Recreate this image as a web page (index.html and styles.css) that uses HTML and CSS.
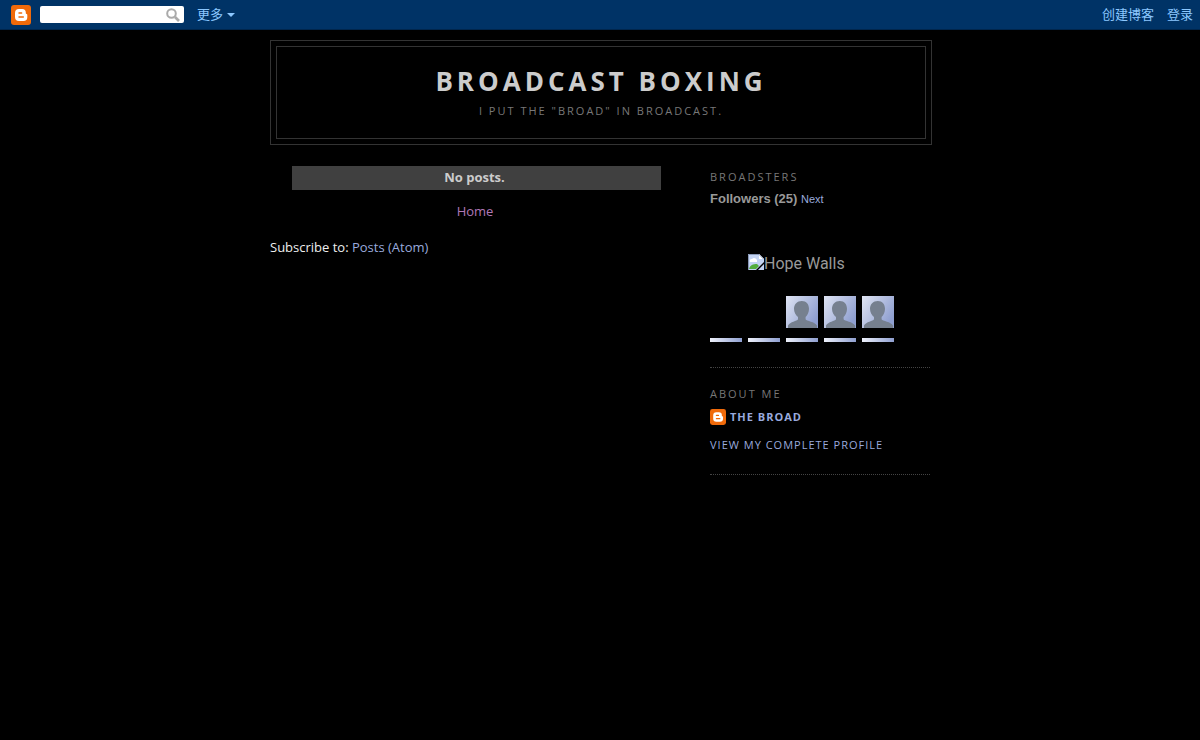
FILE: index.html
```html
<!DOCTYPE html>
<html lang="en">
<head>
    <meta charset="UTF-8">
    <meta name="viewport" content="width=device-width, initial-scale=1">
    <title>Broadcast Boxing</title>
    <link rel="stylesheet" href="styles.css">
</head>
<body>
<!-- shared drawings -->
<svg class="defs" width="0" height="0" aria-hidden="true">
    <defs>
        <linearGradient id="sky" x1="0" y1="0" x2="1" y2="0.6">
            <stop offset="0" stop-color="#e0e5f4"/>
            <stop offset="1" stop-color="#8f9fd0"/>
        </linearGradient>
        <symbol id="blogger" viewBox="0 0 20 20">
            <rect width="20" height="20" rx="3" fill="#f06a0a"/>
            <path fill="#fff" d="M8 4h3.200a3.600 3.600 0 0 1 3.600 3.600v.7c0 .5.3.8.8.8.4 0 .7.3.7.8v2.300a3.800 3.800 0 0 1-3.800 3.800H8a4 4 0 0 1-4-4V8a4 4 0 0 1 4-4z"/>
            <path stroke="#f06a0a" stroke-width="1.500" stroke-linecap="round" d="M8 8h2.600M8 12.100h4.300"/>
        </symbol>
        <symbol id="person" viewBox="0 0 32 32">
            <rect width="32" height="32" fill="url(#sky)"/>
            <path fill="#76808f" d="M15.800 5c4.600 0 7.200 3.200 7.200 7.800 0 3.600-1.500 6.600-3.400 8.200v2.300c.8 2 9.400 2.400 11.400 6.200V32H2v-2.500c2-3.800 9.200-4.200 10-6.200V21c-2.300-1.600-4-4.600-4-8.200C8 8.200 11.200 5 15.800 5z"/>
        </symbol>
    </defs>
</svg>

<div id="navbar">
    <a class="logo" href="#" aria-label="Blogger"><svg width="20" height="20"><use href="#blogger"/></svg></a>
    <form class="search">
        <input type="text" aria-label="Search">
        <button type="submit" aria-label="Search">
            <svg width="14" height="14" viewBox="0 0 14 14" fill="none" stroke="#aaa">
                <circle cx="5.500" cy="5.500" r="4.300" stroke-width="2"/>
                <path d="M9 9l4 4" stroke-width="2.600"/>
            </svg>
        </button>
    </form>
    <button type="button" class="more">更多<span class="arrow"></span></button>
    <div class="account">
        <a href="#">创建博客</a>
        <a href="#">登录</a>
    </div>
</div>

<div id="outer-wrapper">
    <div id="header-wrapper">
        <div id="header">
            <h1>Broadcast Boxing</h1>
            <p class="description">I put the "broad" in broadcast.</p>
        </div>
    </div>

    <div id="content-wrapper">
        <div id="main">
            <div class="status-msg">No posts.</div>
            <div id="blog-pager"><a href="#">Home</a></div>
            <div class="feed-links">Subscribe to: <a href="#">Posts (Atom)</a></div>
        </div>

        <div id="sidebar">
            <div class="widget">
                <h2>Broadsters</h2>
                <div class="followers-title"><b>Followers (25)</b> <a href="#">Next</a></div>
                <div class="followers">
                    <span></span>
                    <span class="broken">
                        <svg width="16" height="16" viewBox="0 0 16 16">
                            <path fill="#c3d3f3" d="M0 0h11l5 5v3L8 16H0z"/>
                            <path fill="#fff" d="M11 0v5h5z"/>
                            <path fill="#fff" d="M2 8a2 2 0 0 1 2-3 3 3 0 0 1 5 3z"/>
                            <path fill="#53ad3c" d="M1 15c1-4 4-5 8-5l2 2-3 3z"/>
                            <path fill="#c3d3f3" d="M16 10v6h-6z"/>
                            <path fill="none" stroke="#8797b5" d="M.5 16V.5H11L15.500 5"/>
                        </svg><span>Hope Walls</span>
                    </span>
                    <span></span>
                    <span></span>
                    <span></span>

                    <span></span>
                    <span></span>
                    <svg class="avatar"><use href="#person"/></svg>
                    <svg class="avatar"><use href="#person"/></svg>
                    <svg class="avatar"><use href="#person"/></svg>

                    <span class="strip"></span>
                    <span class="strip"></span>
                    <span class="strip"></span>
                    <span class="strip"></span>
                    <span class="strip"></span>
                </div>
            </div>

            <div class="widget profile">
                <h2>About Me</h2>
                <a class="name" href="#"><svg width="16" height="16"><use href="#blogger"/></svg>The Broad</a>
                <a class="profile-link" href="#">View my complete profile</a>
            </div>
        </div>
    </div>
</div>
</body>
</html>
```
FILE: styles.css
```css
body {
    margin: 0;
    background: #000;
    color: #ccc;
    font: 13px/20px "Trebuchet MS", "Open Sans", sans-serif;
}

a {
    color: #99aadd;
    text-decoration: none;
}

.defs {
    position: absolute;
}

/* navbar */
#navbar {
    display: flex;
    align-items: center;
    box-sizing: border-box;
    height: 30px;
    padding: 0 7px 0 11px;
    background: #003366;
    border-bottom: 1px solid #00264d;
    font-family: "Liberation Sans", "Noto Sans CJK SC", sans-serif;
}

#navbar svg {
    display: block;
}

#navbar button {
    padding: 0;
    border: 0;
    background: none;
    cursor: pointer;
}

.search {
    display: flex;
    align-items: center;
    box-sizing: border-box;
    width: 144px;
    height: 17px;
    margin-left: 9px;
    padding-right: 4px;
    background: #fff;
    border-radius: 2px;
}

.search input {
    flex: 1;
    min-width: 0;
    height: 17px;
    padding: 0 4px;
    border: 0;
    outline: 0;
    background: none;
    box-sizing: border-box;
}

#navbar .more {
    display: flex;
    align-items: center;
    margin-left: 13px;
    color: #8cc8ff;
    font: inherit;
}

.arrow {
    margin-left: 4px;
    border: 4px solid transparent;
    border-top-color: #8cc8ff;
    border-bottom: 0;
}

.account {
    display: flex;
    gap: 13px;
    margin-left: auto;
}

.account a {
    color: #8cc8ff;
}

/* header */
#outer-wrapper {
    max-width: 660px;
    margin: 0 auto;
    padding-top: 10px;
}

#header-wrapper {
    width: 100%;
    border: 1px solid #333;
}

#header {
    margin: 5px;
    padding: 19px 20px 17px;
    border: 1px solid #333;
    text-align: center;
}

#header h1 {
    margin: 0;
    color: #ccc;
    font-size: 26px;
    line-height: 30px;
    letter-spacing: 4px;
    text-transform: uppercase;
}

.description {
    margin: 5px 0 0;
    color: #777;
    font-size: 11px;
    font-weight: 500;
    letter-spacing: 2px;
    text-transform: uppercase;
}

/* columns */
#content-wrapper {
    display: flex;
    justify-content: space-between;
    padding-top: 21px;
}

#main {
    width: 410px;
}

#sidebar {
    width: 220px;
    padding-top: 1px;
    color: #999;
}

.status-msg {
    margin: 0 19px 0 22px;
    padding: 1px 4px 3px 0;
    background: #404040;
    font-weight: bold;
    text-align: center;
}

#blog-pager {
    margin: 11px 0 16px;
    text-align: center;
}

#blog-pager a {
    color: #b078b8;
}

.feed-links {
    color: #eee;
}

/* sidebar */
.widget {
    margin-bottom: 16px;
    padding-bottom: 25px;
    border-bottom: 1px dotted #444;
}

.widget h2 {
    margin: 0 0 2px;
    color: #777;
    font-size: 11px;
    font-weight: 500;
    letter-spacing: 2px;
    text-transform: uppercase;
}

.followers-title {
    font: 13px/20px "Liberation Sans", Arial, sans-serif;
}

.followers-title a {
    font-size: 11px;
}

.followers {
    display: grid;
    grid-template-columns: repeat(5, 32px);
    grid-template-rows: 32px 32px 4px;
    gap: 10px 6px;
    margin-top: 45px;
}

.broken {
    display: flex;
    align-items: flex-start;
    font: 16px/20px Roboto, sans-serif;
    white-space: nowrap;
}

.broken svg {
    flex: none;
}

.avatar {
    width: 32px;
    height: 32px;
}

.strip {
    background: linear-gradient(90deg, #eef1fb, #8f9fd0);
}

.profile {
    padding-bottom: 19px;
}

.name,
.profile-link {
    display: flex;
    align-items: center;
    gap: 4px;
    font-size: 11px;
    font-weight: 500;
    letter-spacing: 1px;
    text-transform: uppercase;
}

.name {
    margin-bottom: 7px;
    font-weight: bold;
    line-height: 22px;
}
```
